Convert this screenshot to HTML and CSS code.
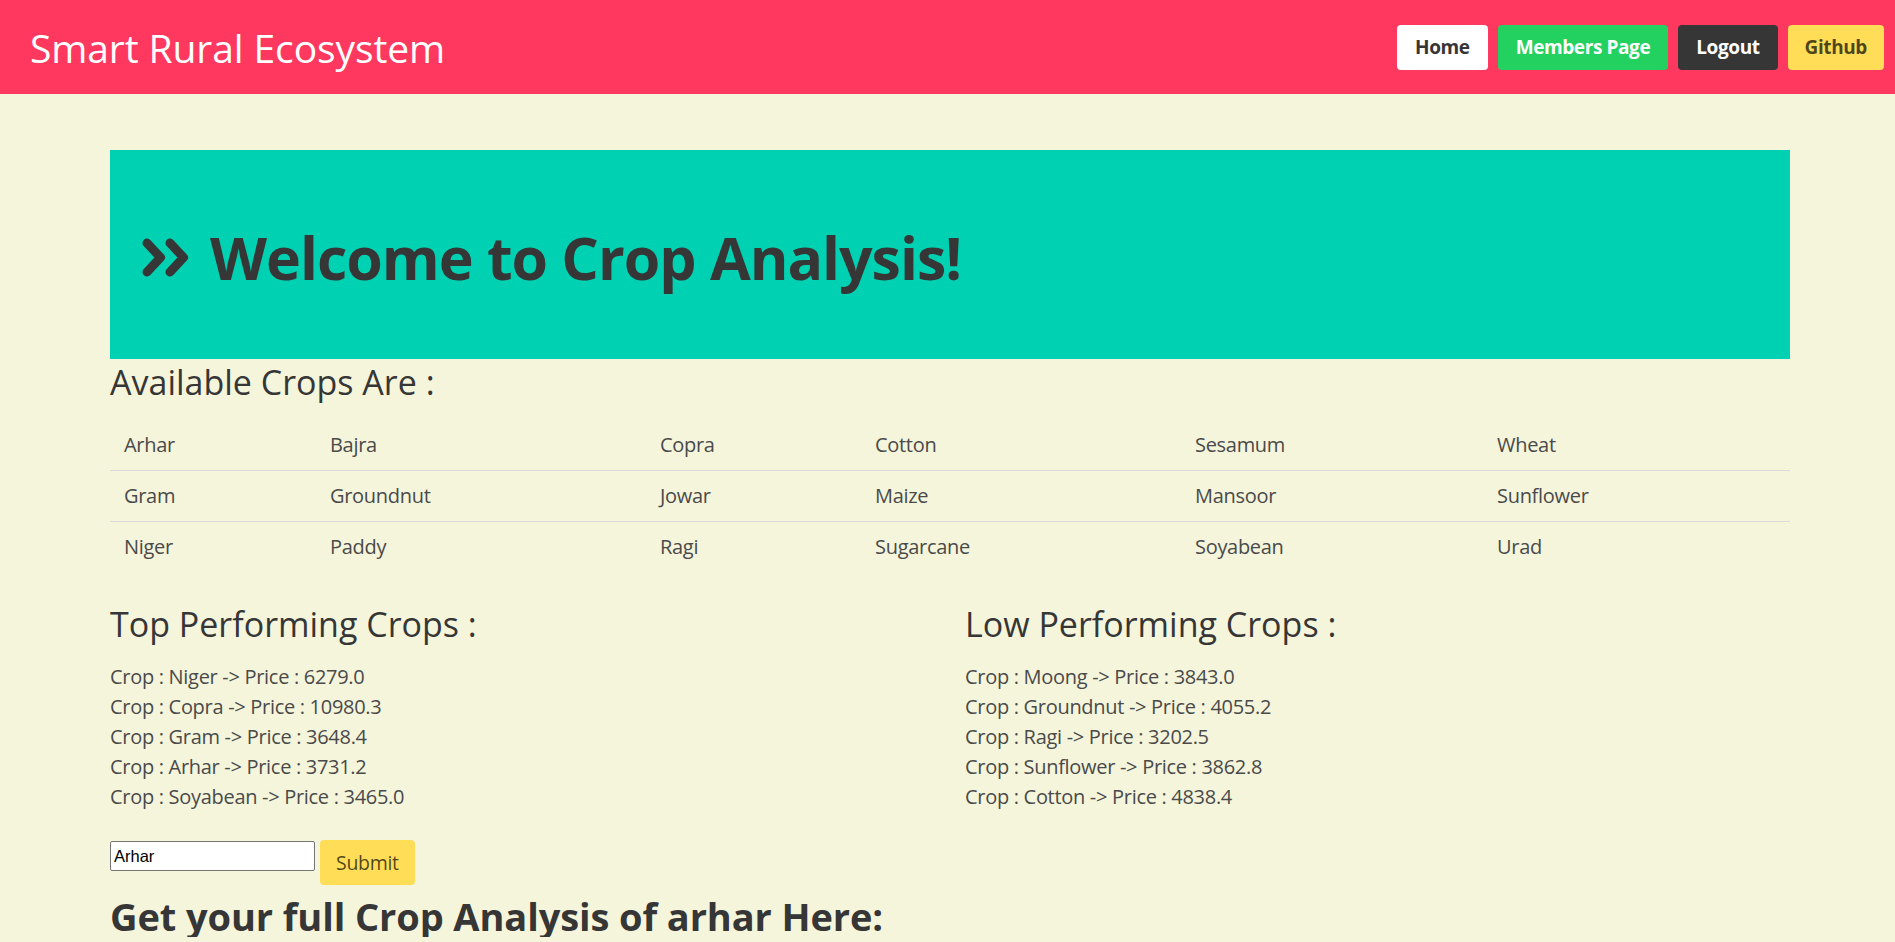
FILE: index.html
```html
<!DOCTYPE html>
<html lang="en">
<head>
<meta charset="utf-8">
<title>Crop Analysis</title>
<link rel="stylesheet" href="styles.css">
</head>
<body>
<nav class="navbar">
  <div class="brand">Smart Rural Ecosystem</div>
  <div class="nav-end">
    <a class="btn btn-white" href="#">Home</a>
    <a class="btn btn-green" href="#">Members Page</a>
    <a class="btn btn-dark" href="#">Logout</a>
    <a class="btn btn-yellow" href="#">Github</a>
  </div>
</nav>

<main class="container">
  <section class="hero">
    <h1 class="hero-title">
      <svg class="hero-icon" width="47" height="39" viewBox="0 0 47 39" aria-hidden="true">
        <polyline points="5,5 18.5,19.5 5,34" fill="none" stroke="#363636" stroke-width="9" stroke-linecap="round" stroke-linejoin="round"/>
        <polyline points="28,5 41.5,19.5 28,34" fill="none" stroke="#363636" stroke-width="9" stroke-linecap="round" stroke-linejoin="round"/>
      </svg>
      <span>Welcome to Crop Analysis!</span>
    </h1>
  </section>

  <h2 class="section-title">Available Crops Are :</h2>
  <table class="crop-table">
    <colgroup>
      <col class="w1"><col class="w2"><col class="w3"><col class="w4"><col class="w5"><col class="w6">
    </colgroup>
    <tbody>
      <tr><td>Arhar</td><td>Bajra</td><td>Copra</td><td>Cotton</td><td>Sesamum</td><td>Wheat</td></tr>
      <tr><td>Gram</td><td>Groundnut</td><td>Jowar</td><td>Maize</td><td>Mansoor</td><td>Sunflower</td></tr>
      <tr><td>Niger</td><td>Paddy</td><td>Ragi</td><td>Sugarcane</td><td>Soyabean</td><td>Urad</td></tr>
    </tbody>
  </table>

  <div class="columns">
    <div class="column">
      <h2 class="section-title col-title">Top Performing Crops :</h2>
      <ul class="price-list">
        <li>Crop : Niger -&gt; Price : 6279.0</li>
        <li>Crop : Copra -&gt; Price : 10980.3</li>
        <li>Crop : Gram -&gt; Price : 3648.4</li>
        <li>Crop : Arhar -&gt; Price : 3731.2</li>
        <li>Crop : Soyabean -&gt; Price : 3465.0</li>
      </ul>
    </div>
    <div class="column">
      <h2 class="section-title col-title">Low Performing Crops :</h2>
      <ul class="price-list">
        <li>Crop : Moong -&gt; Price : 3843.0</li>
        <li>Crop : Groundnut -&gt; Price : 4055.2</li>
        <li>Crop : Ragi -&gt; Price : 3202.5</li>
        <li>Crop : Sunflower -&gt; Price : 3862.8</li>
        <li>Crop : Cotton -&gt; Price : 4838.4</li>
      </ul>
    </div>
  </div>

  <form class="crop-form">
    <input class="crop-input" type="text" value="Arhar">
    <button class="submit-btn" type="button">Submit</button>
  </form>

  <h2 class="analysis-title">Get your full Crop Analysis of arhar Here:</h2>
</main>
</body>
</html>
```

FILE: styles.css
```css
* { box-sizing: border-box; }

html, body {
  margin: 0;
  padding: 0;
}

body {
  background: #f5f5dc;
  font-family: "Open Sans", "Noto Sans", sans-serif;
  color: #4a4a4a;
  font-size: 20px;
  line-height: 1.5;
}

.navbar {
  height: 94px;
  background: #ff3860;
  display: flex;
  align-items: center;
  justify-content: space-between;
  padding: 0 11px 0 30px;
}

.brand {
  color: #fff;
  font-size: 39px;
  line-height: normal;
  font-weight: 400;
  letter-spacing: -0.1px;
}

.nav-end {
  display: flex;
  gap: 10px;
  align-items: center;
}

.btn {
  display: inline-flex;
  align-items: center;
  justify-content: center;
  height: 45px;
  padding: 0 18px;
  border-radius: 4px;
  font-size: 19px;
  font-weight: 700;
  letter-spacing: -0.4px;
  text-decoration: none;
  line-height: 1;
}

.btn-white { background: #fff; color: #363636; }
.btn-green { background: #23d160; color: #fff; }
.btn-dark { background: #363636; color: #fff; }
.btn-yellow { background: #ffdd57; color: rgba(0, 0, 0, 0.7); padding: 0 17px; }

.container {
  width: 1680px;
  margin: 0 105px 0 110px;
}

.hero {
  margin-top: 56px;
  height: 209px;
  background: #00d1b2;
  padding: 74px 32px 0;
}

.hero-title {
  margin: 0;
  display: flex;
  align-items: center;
  gap: 21px;
  font-size: 59px;
  line-height: 66px;
  font-weight: 700;
  letter-spacing: -1px;
  color: #363636;
}

.hero-icon {
  flex: none;
}

.section-title {
  margin: 4px 0 19px;
  font-size: 34px;
  line-height: 38px;
  font-weight: 400;
  color: #363636;
}

.crop-table {
  width: 100%;
  border-collapse: collapse;
  table-layout: fixed;
  letter-spacing: -0.3px;
}

.w1 { width: 206px; }
.w2 { width: 330px; }
.w3 { width: 215px; }
.w4 { width: 320px; }
.w5 { width: 302px; }
.w6 { width: 307px; }

.crop-table td {
  padding: 10px 14px;
  line-height: 30px;
  border-bottom: 1px solid #dbdbdb;
  color: #4a4a4a;
}

.crop-table tr:last-child td {
  border-bottom: 0;
}

.columns {
  display: grid;
  grid-template-columns: 1fr 1fr;
  column-gap: 30px;
  margin-top: 33px;
}

.col-title {
  margin: 0 0 19px;
}

.price-list {
  list-style: none;
  margin: 0;
  padding: 0;
  letter-spacing: -0.3px;
}

.price-list li {
  line-height: 30px;
}

.crop-form {
  margin-top: 28px;
  display: flex;
  align-items: flex-start;
  gap: 5px;
}

.crop-input {
  margin-top: 1px;
  width: 205px;
  height: 30px;
  border: 1px solid #767676;
  border-radius: 2px;
  padding: 1px 3px;
  background: #fff;
  font-family: "Liberation Sans", Arial, sans-serif;
  font-size: 16.5px;
  color: #000;
}

.submit-btn {
  height: 45px;
  padding: 0 16px;
  border: 0;
  border-radius: 4px;
  background: #ffdd57;
  color: rgba(0, 0, 0, 0.7);
  font-family: "Open Sans", "Noto Sans", sans-serif;
  font-size: 19.5px;
  letter-spacing: -0.3px;
}

.analysis-title {
  margin: 10px 0 0;
  font-size: 38px;
  line-height: 42px;
  font-weight: 700;
  color: #363636;
  letter-spacing: -0.1px;
}
```
